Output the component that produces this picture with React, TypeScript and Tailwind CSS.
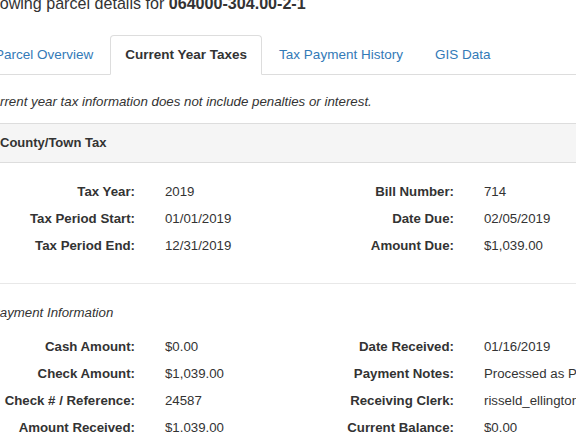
const tabs = [
  { label: "Parcel Overview", active: false },
  { label: "Current Year Taxes", active: true },
  { label: "Tax Payment History", active: false },
  { label: "GIS Data", active: false },
];

const taxRows = [
  ["Tax Year:", "2019", "Bill Number:", "714"],
  ["Tax Period Start:", "01/01/2019", "Date Due:", "02/05/2019"],
  ["Tax Period End:", "12/31/2019", "Amount Due:", "$1,039.00"],
];

const paymentRows = [
  ["Cash Amount:", "$0.00", "Date Received:", "01/16/2019"],
  ["Check Amount:", "$1,039.00", "Payment Notes:", "Processed as Payment"],
  ["Check # / Reference:", "24587", "Receiving Clerk:", "risseld_ellington"],
  ["Amount Received:", "$1,039.00", "Current Balance:", "$0.00"],
];

const FieldGrid = ({ rows }: { rows: string[][] }) => (
  <div className="grid grid-cols-[159px_160px_159px_1fr] auto-rows-[27px] items-center text-[13.25px]">
    {rows.map((r) => [
      <div key={r[0]} className="text-right pr-[15px] font-bold whitespace-nowrap">
        {r[0]}
      </div>,
      <div key={r[0] + "v"} className="pl-[15px] whitespace-nowrap">
        {r[1]}
      </div>,
      <div key={r[2]} className="text-right pr-[15px] font-bold whitespace-nowrap">
        {r[2]}
      </div>,
      <div key={r[2] + "v"} className="pl-[15px] whitespace-nowrap">
        {r[3]}
      </div>,
    ])}
  </div>
);

export default function App() {
  return (
    <div className="w-[576px] h-[432px] overflow-hidden bg-white text-[#333] font-['Liberation_Sans',Arial,sans-serif] text-[13px] leading-[1.42857]">
      <div className="-ml-[16px] -mt-[5px] w-[720px]">
        {/* Heading */}
        <h4 className="-ml-[4px] text-[16.1px] leading-[1.1] font-normal whitespace-nowrap">
          Showing parcel details for <b>064000-304.00-2-1</b>
        </h4>

        {/* Tabs */}
        <ul className="mt-[22px] -ml-[4px] flex border-b border-[#ddd] text-[13.5px] leading-[18.57px]">
          {tabs.map((t) => (
            <li key={t.label} className="-mb-px mr-[2px]">
              <a
                className={
                  t.active
                    ? "block px-[14px] py-[10px] border border-[#ddd] border-b-white bg-white rounded-t-[4px] font-bold text-[#333]"
                    : "block px-[14px] py-[10px] border border-transparent rounded-t-[4px] text-[#337ab7]"
                }
              >
                {t.label}
              </a>
            </li>
          ))}
        </ul>

        <p className="mt-[18px] mb-[11px] -ml-[1px] italic whitespace-nowrap text-[13.3px] leading-[18.57px]">
          Current year tax information does not include penalties or interest.
        </p>

        {/* County/Town panel */}
        <div className="border border-[#ddd] rounded-[4px]">
          <div className="bg-[#f5f5f5] px-[15px] py-[10px] border-b border-[#ddd] font-bold">
            County/Town Tax
          </div>
          <div className="pl-[6px] pt-[16px] pb-[15px]">
            <FieldGrid rows={taxRows} />
            <hr className="mt-[23px] mb-[20px] border-0 border-t border-[#e8e8e8]" />
            <p className="italic mb-[11px] text-[13.25px]">Payment Information</p>
            <FieldGrid rows={paymentRows} />
          </div>
        </div>
      </div>
    </div>
  );
}
